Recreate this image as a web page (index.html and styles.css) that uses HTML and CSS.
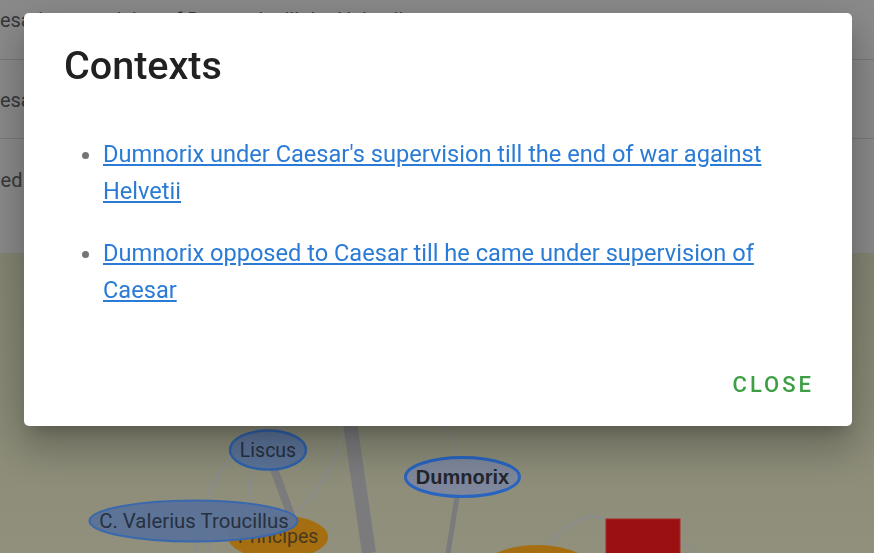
FILE: index.html
```html
<!DOCTYPE html>
<html lang="en">
<head>
<meta charset="utf-8">
<title>Contexts</title>
<link rel="stylesheet" href="styles.css">
</head>
<body>
<div class="page">
  <div class="rows">
    <div class="row row-1"><span class="cell shift-ca">Caesar's supervision of Dumnorix till the Helvetii</span></div>
    <div class="row row-2"><span class="cell shift-ca">Caesar</span></div>
    <div class="row row-3"><span class="cell shift-oppos">opposed</span></div>
  </div>
  <div class="graph">
    <svg class="graph-svg" width="874" height="300" viewBox="0 0 874 300">
      <g fill="none" stroke="#8a8c92" stroke-width="1.5">
        <path d="M270 170 C 230 190, 200 240, 196 300"/>
        <path d="M290 170 C 250 200, 240 240, 262 262"/>
        <path d="M345 178 C 330 230, 300 260, 280 270"/>
        <path d="M440 168 C 452 180, 456 190, 458 204"/>
        <path d="M550 292 C 565 270, 590 258, 606 267"/>
        <path d="M679 290 C 690 292, 694 298, 694 300"/>
        <path d="M210 268 C 205 280, 205 290, 210 300"/>
      </g>
      <g stroke="#7b7b7d" stroke-linecap="butt">
        <line x1="350" y1="170" x2="369" y2="300" stroke-width="14"/>
        <line x1="274" y1="216" x2="292" y2="265" stroke-width="8"/>
        <line x1="457" y1="244" x2="448" y2="300" stroke-width="5"/>
      </g>
      <ellipse cx="537" cy="322" rx="60" ry="30" fill="#a46e11"/>
      <rect x="606" y="266" width="74" height="40" fill="#9b1011" stroke="#a82a2a" stroke-width="1"/>
      <ellipse cx="268" cy="197" rx="38" ry="19.5" fill="#5b7398" stroke="#2f63ad" stroke-width="2.5"/>
      <text x="268" y="204" class="node-label">Liscus</text>
      <ellipse cx="278" cy="284" rx="50" ry="22" fill="#a46e11"/>
      <text x="278" y="290" class="node-label orange-label">Principes</text>
      <ellipse cx="193.5" cy="268" rx="104" ry="20.5" fill="#5b7398" stroke="#3a68ad" stroke-width="2" fill-opacity="0.97"/>
      <text x="194" y="274.5" class="node-label wide-label">C. Valerius Troucillus</text>
      <ellipse cx="462.5" cy="224" rx="57" ry="19.5" fill="#7e879b" stroke="#2864c0" stroke-width="3"/>
      <text x="462.5" y="231" class="node-label bold-label">Dumnorix</text>
    </svg>
  </div>
</div>

<div class="backdrop"></div>

<div class="dialog" role="dialog" aria-labelledby="dialog-title">
  <h2 class="dialog-title" id="dialog-title">Contexts</h2>
  <ul class="context-list">
    <li class="context-item"><a class="context-link" href="#">Dumnorix under Caesar's supervision till the end of war against Helvetii</a></li>
    <li class="context-item"><a class="context-link" href="#">Dumnorix opposed to Caesar till he came under supervision of Caesar</a></li>
  </ul>
  <div class="dialog-actions">
    <button class="close-button" type="button">Close</button>
  </div>
</div>
</body>
</html>
```

FILE: styles.css
```css
* {
  box-sizing: border-box;
}

html, body {
  margin: 0;
  padding: 0;
  width: 874px;
  height: 553px;
  overflow: hidden;
  font-family: Roboto, "Liberation Sans", sans-serif;
}

.page {
  display: flex;
  flex-direction: column;
  height: 553px;
}

.rows {
  display: flex;
  flex-direction: column;
  background: #8b8b8b;
}

.row {
  border-bottom: 1px solid #7a7a7a;
  font-size: 20px;
  line-height: 24px;
  color: #383838;
  white-space: nowrap;
  overflow: hidden;
}

.row-1 {
  height: 60px;
  padding-top: 8px;
}

.row-2 {
  height: 79px;
  padding-top: 28px;
}

.row-3 {
  height: 114px;
  padding-top: 29px;
  border-bottom: none;
}

.cell {
  display: inline-block;
}

.shift-ca {
  margin-left: -24px;
}

.shift-oppos {
  margin-left: -55px;
}

.graph {
  flex: 1;
  background: linear-gradient(#858573, #90907c);
  overflow: hidden;
}

.graph-svg {
  display: block;
}

.node-label {
  font-family: Roboto, "Liberation Sans", sans-serif;
  font-size: 19.5px;
  fill: #27303f;
  text-anchor: middle;
}

.wide-label {
  font-size: 20.4px;
}

.orange-label {
  fill: #4a3a1e;
}

.bold-label {
  font-family: "Liberation Sans", Arial, sans-serif;
  font-size: 20px;
  font-weight: 700;
  fill: #23262e;
}

.backdrop {
  position: fixed;
  inset: 0;
  background: rgba(0, 0, 0, 0);
}

.dialog {
  position: fixed;
  left: 24px;
  top: 13px;
  width: 828px;
  height: 413px;
  background: #ffffff;
  border-radius: 5px;
  display: flex;
  flex-direction: column;
  box-shadow: 0 11px 15px -7px rgba(0, 0, 0, 0.2), 0 24px 38px 3px rgba(0, 0, 0, 0.14), 0 9px 46px 8px rgba(0, 0, 0, 0.12);
}

.dialog-title {
  margin: 0;
  padding: 30px 40px 0;
  font-size: 39.5px;
  font-weight: 500;
  line-height: 45px;
  color: #212121;
}

.context-list {
  margin: 48px 0 0;
  padding: 0 40px 0 79px;
  color: #757575;
}

.context-item {
  font-size: 23.6px;
  line-height: 37px;
  margin-bottom: 25px;
}

.context-item:last-child {
  margin-bottom: 0;
}

.context-link {
  color: #2a7bd6;
  text-decoration: underline;
}

.dialog-actions {
  margin-top: auto;
  display: flex;
  justify-content: flex-end;
  padding: 0 38px 29px 0;
}

.close-button {
  background: none;
  border: none;
  padding: 0;
  font-family: Roboto, "Liberation Sans", sans-serif;
  font-size: 22px;
  font-weight: 500;
  line-height: 24px;
  letter-spacing: 3px;
  text-transform: uppercase;
  color: #3e9e44;
  cursor: pointer;
}
```
